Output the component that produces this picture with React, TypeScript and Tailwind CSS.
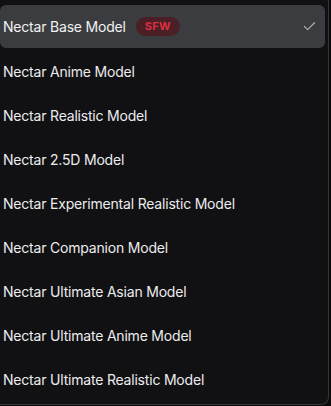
const models = [
  "Nectar Base Model",
  "Nectar Anime Model",
  "Nectar Realistic Model",
  "Nectar 2.5D Model",
  "Nectar Experimental Realistic Model",
  "Nectar Companion Model",
  "Nectar Ultimate Asian Model",
  "Nectar Ultimate Anime Model",
  "Nectar Ultimate Realistic Model",
];

export default function App() {
  return (
    <div className="w-[331px] h-[406px] bg-[#0a0a0b] font-['Inter',sans-serif]">
      <div className="w-[329px] h-[405px] bg-[#111113] border-r border-b border-[#34353a] rounded-br-lg pt-[5px] pr-[3px]">
        {models.map((name, i) => (
          <div
            key={name}
            className={
              i === 0
                ? "h-[43px] mb-[1px] flex items-center pl-[3px] pr-[8px] rounded-md bg-[#3b3c40] text-[#f2f2f3] text-[14px] tracking-[-0.2px]"
                : "h-[44px] flex items-center pl-[3px] pr-[8px] text-[#ececee] text-[14px] tracking-[-0.2px]"
            }
          >
            <span>{name}</span>
            {i === 0 && (
              <span className="ml-[10px] h-[19px] px-[9px] rounded-full bg-[#4a1f26] text-[#dc3040] text-[11px] font-bold flex items-center tracking-wide">
                SFW
              </span>
            )}
            {i === 0 && (
              <svg className="ml-auto" width="15" height="15" viewBox="0 0 24 24" fill="none" stroke="#a9aaae" strokeWidth="2" strokeLinecap="round" strokeLinejoin="round">
                <path d="M20 6 9 17l-5-5" />
              </svg>
            )}
          </div>
        ))}
      </div>
    </div>
  );
}
